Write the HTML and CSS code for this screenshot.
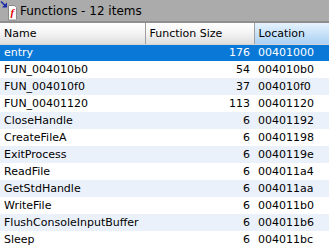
FILE: index.html
```html
<!DOCTYPE html>
<html lang="en">
  <head>
    <meta charset="UTF-8" />
    <title>Functions</title>
    <link rel="stylesheet" href="styles.css">
  </head>
  <body>
    <div class="panel">
      <div class="title-bar">
        <svg class="title-icon" width="18" height="21" viewBox="0 0 18 21">
          <path d="M8.5 5.5h6l2 2v12.5h-8z" fill="#fff" stroke="#8a8a8a" />
          <path d="M9.5 19.5h7" stroke="#c8c8c8" />
          <text x="10.5" y="16" font-family="Liberation Serif, serif" font-style="italic" font-weight="bold" font-size="11" fill="#e00000">f</text>
          <path d="M1 1.5l4.5 4.5" stroke="#1a2aa8" stroke-width="1.6" />
          <path d="M2 7.5h5v-5z" fill="#1a2aa8" />
        </svg>
        <span class="title-text">Functions - 12 items</span>
      </div>

      <table class="func-table">
        <thead>
          <tr>
            <th class="col-name">Name</th>
            <th class="col-size">Function Size</th>
            <th class="col-loc sorted">Location</th>
          </tr>
        </thead>
        <tbody>
          <tr class="selected"><td>entry</td><td class="num">176</td><td>00401000</td></tr>
          <tr><td>FUN_004010b0</td><td class="num">54</td><td>004010b0</td></tr>
          <tr><td>FUN_004010f0</td><td class="num">37</td><td>004010f0</td></tr>
          <tr><td>FUN_00401120</td><td class="num">113</td><td>00401120</td></tr>
          <tr><td>CloseHandle</td><td class="num">6</td><td>00401192</td></tr>
          <tr><td>CreateFileA</td><td class="num">6</td><td>00401198</td></tr>
          <tr><td>ExitProcess</td><td class="num">6</td><td>0040119e</td></tr>
          <tr><td>ReadFile</td><td class="num">6</td><td>004011a4</td></tr>
          <tr><td>GetStdHandle</td><td class="num">6</td><td>004011aa</td></tr>
          <tr><td>WriteFile</td><td class="num">6</td><td>004011b0</td></tr>
          <tr><td>FlushConsoleInputBuffer</td><td class="num">6</td><td>004011b6</td></tr>
          <tr><td>Sleep</td><td class="num">6</td><td>004011bc</td></tr>
        </tbody>
      </table>
    </div>
  </body>
</html>
```

FILE: styles.css
```css
* {
  margin: 0;
  padding: 0;
  box-sizing: border-box;
}

body {
  font-family: "DejaVu Sans", sans-serif;
  background: #fff;
  color: #000;
  overflow: hidden;
}

.panel {
  width: 329px;
}

.title-bar {
  height: 23px;
  background: #ababab;
  border-bottom: 2px solid #8e8e8e;
  display: flex;
  align-items: flex-start;
}

.title-icon {
  display: block;
  flex-shrink: 0;
}

.title-text {
  font-size: 12px;
  line-height: 21px;
  margin-left: 2px;
  padding-top: 1px;
  color: #000;
}

.func-table {
  width: 329px;
  border-collapse: collapse;
  table-layout: fixed;
  font-size: 11px;
}

.func-table th {
  height: 21px;
  font-weight: normal;
  text-align: left;
  padding: 0 4px;
  background: linear-gradient(#ffffff, #f3f3f3 50%, #dedede);
  border-right: 1px solid #a0a0a0;
  border-bottom: 1px solid #d5d5d5;
  white-space: nowrap;
  overflow: hidden;
}

.func-table th.sorted {
  background: linear-gradient(#e6f2fd, #c8e2f8 50%, #a9d0f2);
  border-right: none;
}

.col-name {
  width: 145px;
}

.col-size {
  width: 109px;
}

.func-table td {
  height: 17px;
  padding: 0 4px;
  white-space: nowrap;
  overflow: hidden;
}

.func-table td.num {
  text-align: right;
}

.func-table tbody tr:nth-child(even) {
  background: #ffffff;
}

.func-table tbody tr:nth-child(odd) {
  background: #ebf1fb;
}

.func-table tbody tr.selected {
  background: #0a78d6;
  color: #fff;
}
```
